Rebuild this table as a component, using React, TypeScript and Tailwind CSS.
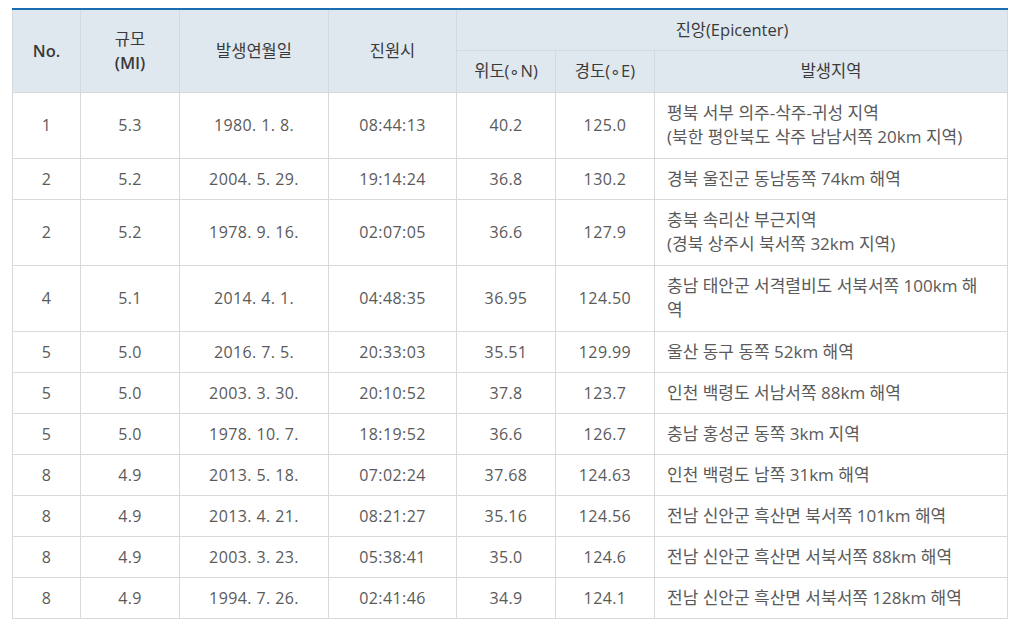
const rows = [
  { no: '1', mag: '5.3', date: '1980. 1. 8.', time: '08:44:13', lat: '40.2', lon: '125.0', area: ['평북 서부 의주-삭주-귀성 지역', '(북한 평안북도 삭주 남남서쪽 20km 지역)'] },
  { no: '2', mag: '5.2', date: '2004. 5. 29.', time: '19:14:24', lat: '36.8', lon: '130.2', area: ['경북 울진군 동남동쪽 74km 해역'] },
  { no: '2', mag: '5.2', date: '1978. 9. 16.', time: '02:07:05', lat: '36.6', lon: '127.9', area: ['충북 속리산 부근지역', '(경북 상주시 북서쪽 32km 지역)'] },
  { no: '4', mag: '5.1', date: '2014. 4. 1.', time: '04:48:35', lat: '36.95', lon: '124.50', area: ['충남 태안군 서격렬비도 서북서쪽 100km 해', '역'] },
  { no: '5', mag: '5.0', date: '2016. 7. 5.', time: '20:33:03', lat: '35.51', lon: '129.99', area: ['울산 동구 동쪽 52km 해역'] },
  { no: '5', mag: '5.0', date: '2003. 3. 30.', time: '20:10:52', lat: '37.8', lon: '123.7', area: ['인천 백령도 서남서쪽 88km 해역'] },
  { no: '5', mag: '5.0', date: '1978. 10. 7.', time: '18:19:52', lat: '36.6', lon: '126.7', area: ['충남 홍성군 동쪽 3km 지역'] },
  { no: '8', mag: '4.9', date: '2013. 5. 18.', time: '07:02:24', lat: '37.68', lon: '124.63', area: ['인천 백령도 남쪽 31km 해역'] },
  { no: '8', mag: '4.9', date: '2013. 4. 21.', time: '08:21:27', lat: '35.16', lon: '124.56', area: ['전남 신안군 흑산면 북서쪽 101km 해역'] },
  { no: '8', mag: '4.9', date: '2003. 3. 23.', time: '05:38:41', lat: '35.0', lon: '124.6', area: ['전남 신안군 흑산면 서북서쪽 88km 해역'] },
  { no: '8', mag: '4.9', date: '1994. 7. 26.', time: '02:41:46', lat: '34.9', lon: '124.1', area: ['전남 신안군 흑산면 서북서쪽 128km 해역'] },
]

export default function App() {
  const th = 'border border-[#d6d9dc] bg-[#dfe8ef] text-[#3a3a3a] text-[16.5px] font-normal text-center align-middle leading-[24px]'
  const td = 'border border-[#d9d9d9] text-center align-middle text-[#5a5a5a] leading-[24px]'
  const num = `${td} text-[16px] tracking-[0.4px]`

  return (
    <div className="min-h-[634px] w-[1024px] bg-white pt-[8px] pl-[12px] [font-family:'Open_Sans','Noto_Sans_CJK_KR',sans-serif]">
      <table className="w-[996px] table-fixed border-collapse border-t-[2px] border-t-[#1b6db3]">
        <colgroup>
          <col className="w-[68px]" />
          <col className="w-[99px]" />
          <col className="w-[149px]" />
          <col className="w-[128px]" />
          <col className="w-[99px]" />
          <col className="w-[99px]" />
          <col />
        </colgroup>
        <thead>
          <tr className="h-[41px]">
            <th rowSpan={2} className={`${th} font-semibold`}>No.</th>
            <th rowSpan={2} className={th}>
              규모
              <br />
              <span className="font-semibold">(Ml)</span>
            </th>
            <th rowSpan={2} className={th}>발생연월일</th>
            <th rowSpan={2} className={th}>진원시</th>
            <th colSpan={3} className={th}>진앙(Epicenter)</th>
          </tr>
          <tr className="h-[42px]">
            <th className={th}>위도(∘N)</th>
            <th className={th}>경도(∘E)</th>
            <th className={th}>발생지역</th>
          </tr>
        </thead>
        <tbody>
          {rows.map((r, i) => (
            <tr key={i} className={r.area.length > 1 ? 'h-[66px]' : 'h-[41px]'}>
              <td className={num}>{r.no}</td>
              <td className={num}>{r.mag}</td>
              <td className={num}>{r.date}</td>
              <td className={num}>{r.time}</td>
              <td className={num}>{r.lat}</td>
              <td className={num}>{r.lon}</td>
              <td className={`${td} !text-left text-[17px] whitespace-nowrap px-[12px] py-[8px]`}>
                {r.area.map((line, j) => (
                  <div key={j}>{line}</div>
                ))}
              </td>
            </tr>
          ))}
        </tbody>
      </table>
    </div>
  )
}
